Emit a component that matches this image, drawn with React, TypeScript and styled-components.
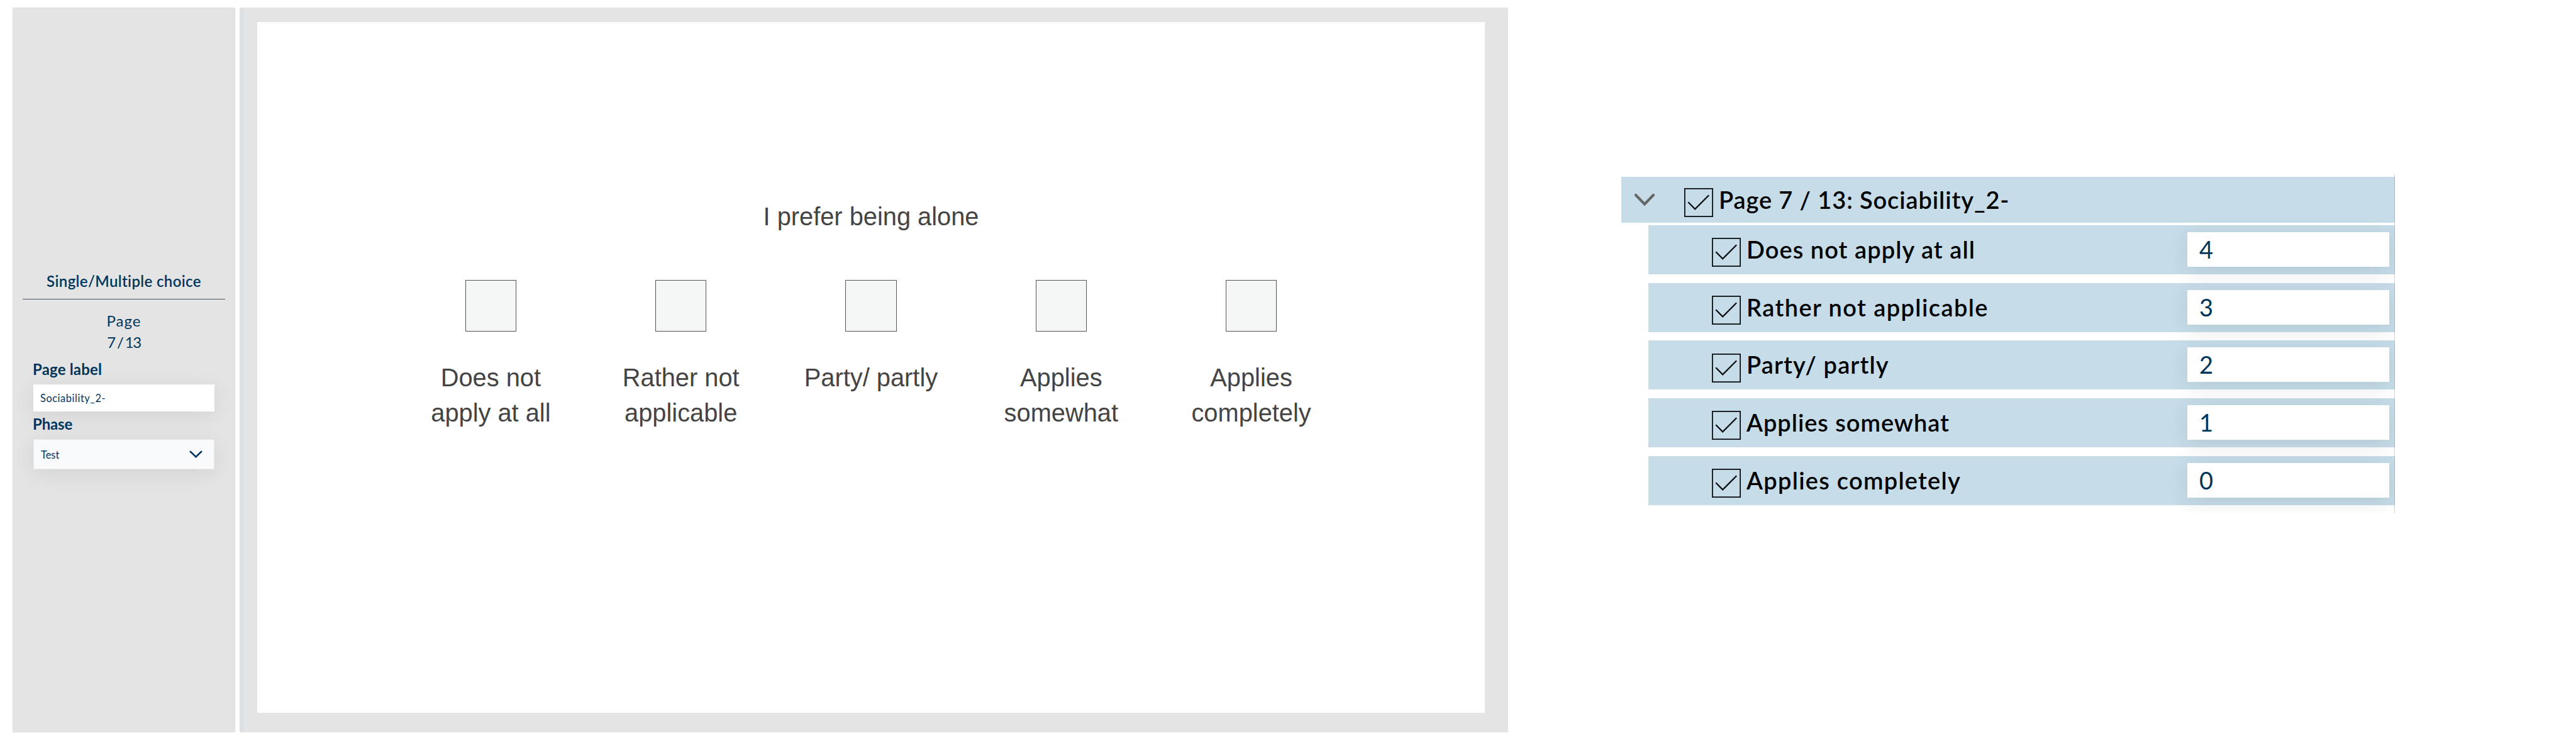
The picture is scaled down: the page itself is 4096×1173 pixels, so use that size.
import { Fragment } from "react";
import styled, { createGlobalStyle } from "styled-components";

/**
 * >>> Style
 */
const GlobalStyle = createGlobalStyle`
  * {
    box-sizing: border-box;
  }
  body {
    margin: 0;
    background-color: #ffffff;
    font-family: "Lato", "Open Sans", sans-serif;
  }
  h2, h3, p {
    margin: 0;
    font-weight: 400;
  }
`;
const Page = styled.div`
  display: flex;
  align-items: flex-start;

  width: 4096px;
  height: 1173px;

  padding: 12px 0 0 20px;
  overflow: hidden;
`;
const Sidebar = styled.aside`
  width: 354px;
  height: 1152px;

  background-color: #e4e4e4;
  border: 1px solid #e0e0e0;
  border-radius: 2px;
  color: #00365c;

  padding: 418px 15px 0;
  margin-right: 7px;
`;
const SidebarTitle = styled.h2`
  height: 45px;

  border-bottom: 1px solid #4b5260;

  font-size: 24px;
  font-weight: 600;
  line-height: 31px;
  letter-spacing: 0.37px;
  text-align: center;
`;
const PageCount = styled.div`
  font-size: 24px;
  line-height: 34px;
  text-align: center;

  margin: 17px 0 11px;
  p.name {
    letter-spacing: 1px;
  }
  p.count {
    letter-spacing: -1.4px;
    word-spacing: -1.5px;
  }
`;
const Form = styled.div`
  padding: 0 17px;
`;
interface FieldNameProps {
  spacing: number;
}
const FieldName = styled.h3<FieldNameProps>`
  font-size: 24px;
  font-weight: 700;
  line-height: 30px;
  letter-spacing: ${(props) => `${props.spacing}px`};

  margin-left: -1px;
`;
const Field = styled.div`
  display: flex;
  align-items: center;

  font-size: 16.4px;

  box-shadow: 0 6px 34px rgba(0, 0, 0, 0.08);
`;
const TextField = styled(Field)`
  height: 43px;

  background-color: #ffffff;
  letter-spacing: 0.55px;

  padding-left: 11px;
  margin: 9px 0 5px;
`;
const SelectField = styled(Field)`
  justify-content: space-between;

  height: 48px;

  background-color: #f9fafc;
  border: 1px solid #e8e9eb;

  padding: 0 18px 0 11px;
  margin-top: 9px;
`;
const Stage = styled.main`
  width: 2017px;
  height: 1152px;

  background-color: #e4e4e4;
  border-left: 7px solid #dbe0e5;
  border-radius: 2px 0 0 2px;

  padding: 23px 37px 0 21px;
  margin-right: 180px;
`;
const Question = styled.section`
  display: flex;
  flex-direction: column;
  align-items: center;

  height: 1098px;

  background-color: #ffffff;
  color: #444444;
  font-family: "Liberation Sans", Arial, sans-serif;
  font-size: 39.8px;
  line-height: 56px;
  text-align: center;

  padding-top: 281px;
`;
const Answers = styled.div`
  display: flex;

  margin-top: 73px;
`;
const Answer = styled.div`
  display: flex;
  flex-direction: column;
  align-items: center;

  width: 302.3px;
`;
const AnswerBox = styled.span`
  width: 81.5px;
  height: 81.5px;

  background-color: #f5f7f6;
  border: 1px solid #555555;

  margin-bottom: 45.5px;
`;
const Tree = styled.section`
  position: relative;

  width: 1230px;
  height: 539px;

  padding-top: 4px;
  margin-top: 265px;
  overflow: hidden;

  &::after {
    content: "";
    position: absolute;
    top: 0;
    right: 0;
    bottom: 0;

    width: 1px;

    background-color: rgba(0, 0, 0, 0.17);
  }
`;
const TreeHeader = styled.div`
  display: flex;
  align-items: center;

  height: 73px;

  background-color: #c6dde9;

  padding-left: 20px;
  margin-bottom: 4px;
`;
const TreeRow = styled.div`
  display: flex;
  align-items: flex-start;

  height: 78px;

  background-color: #c6dde9;

  padding: 0 9px 0 101px;
  margin: 0 0 13.65px 43px;
`;
interface TreeLabelProps {
  height: number;
  spacing: number;
}
const TreeLabel = styled.p<TreeLabelProps>`
  height: ${(props) => `${props.height}px`};

  color: #000000;
  font-size: 38px;
  font-weight: 600;
  line-height: ${(props) => `${props.height - 1}px`};
  letter-spacing: ${(props) => `${props.spacing}px`};
  white-space: nowrap;

  margin-left: 9px;
`;
const ScoreInput = styled.div`
  width: 321px;
  height: 55px;

  background-color: #ffffff;
  box-shadow: 0 6px 34px rgba(0, 0, 0, 0.1);
  color: #00365c;
  font-size: 38px;
  line-height: 54px;

  padding-left: 19px;
  margin: 11px 0 0 auto;
`;
const HeaderChevron = styled.svg`
  width: 34px;
  height: 22px;

  margin: 0 46px 0 0;
`;
const CheckSvg = styled.svg<{ top: number }>`
  flex: none;

  width: 46px;
  height: 46px;

  margin-top: ${(props) => `${props.top}px`};
`;
// <<< Style

const answers = [
  ["Does not", "apply at all"],
  ["Rather not", "applicable"],
  ["Party/ partly"],
  ["Applies", "somewhat"],
  ["Applies", "completely"],
];

const scores = [
  { label: "Does not apply at all", score: 4, spacing: 1.05 },
  { label: "Rather not applicable", score: 3, spacing: 1.4 },
  { label: "Party/ partly", score: 2, spacing: 1.1 },
  { label: "Applies somewhat", score: 1, spacing: 0.94 },
  { label: "Applies completely", score: 0, spacing: 1.25 },
];

const CheckBox = ({ top }: { top: number }) => (
  <CheckSvg top={top} viewBox="0 0 46 46" fill="none" stroke="#0b0f12">
    <rect x="0.9" y="0.9" width="44.2" height="44.2" strokeWidth="1.8" />
    <path d="M6.3 22.2L17.2 33.4L39.2 11.3" strokeWidth="2.3" />
  </CheckSvg>
);

const App = () => {
  return (
    <Page>
      <GlobalStyle />
      <Sidebar>
        <SidebarTitle>Single/Multiple choice</SidebarTitle>
        <PageCount>
          <p className="name">Page</p>
          <p className="count">7 / 13</p>
        </PageCount>
        <Form>
          <FieldName spacing={0.19}>Page label</FieldName>
          <TextField>Sociability_2-</TextField>
          <FieldName spacing={-0.15}>Phase</FieldName>
          <SelectField>
            Test
            <svg width="21" height="13" viewBox="0 0 21 13" fill="none">
              <path
                d="M1.8 1.8L10.5 10.2L19.2 1.8"
                stroke="#00365c"
                strokeWidth="2.6"
                strokeLinecap="round"
              />
            </svg>
          </SelectField>
        </Form>
      </Sidebar>
      <Stage>
        <Question>
          <p>I prefer being alone</p>
          <Answers>
            {answers.map((lines) => (
              <Answer key={lines.join(" ")}>
                <AnswerBox />
                <p>
                  {lines.map((line, i) => (
                    <Fragment key={line}>
                      {i > 0 && <br />}
                      {line}
                    </Fragment>
                  ))}
                </p>
              </Answer>
            ))}
          </Answers>
        </Question>
      </Stage>
      <Tree>
        <TreeHeader>
          <HeaderChevron viewBox="0 0 34 22" fill="none">
            <path
              d="M3 3L17 17.5L31 3"
              stroke="#666666"
              strokeWidth="4.2"
              strokeLinecap="round"
            />
          </HeaderChevron>
          <CheckBox top={9} />
          <TreeLabel height={73} spacing={0.88}>
            Page 7 / 13: Sociability_2-
          </TreeLabel>
        </TreeHeader>
        {scores.map(({ label, score, spacing }) => (
          <TreeRow key={label}>
            <CheckBox top={20.3} />
            <TreeLabel height={78} spacing={spacing}>
              {label}
            </TreeLabel>
            <ScoreInput>{score}</ScoreInput>
          </TreeRow>
        ))}
      </Tree>
    </Page>
  );
};

export default App;
